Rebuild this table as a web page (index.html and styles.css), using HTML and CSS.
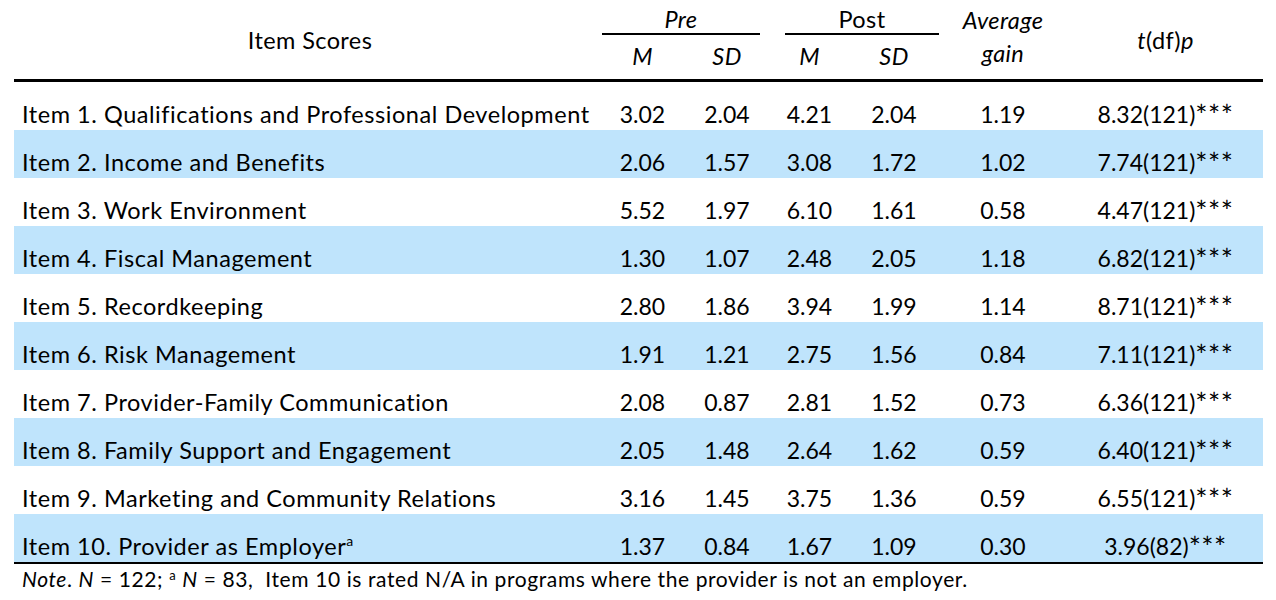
FILE: index.html
```html
<!DOCTYPE html>
<html lang="en">
<head>
<meta charset="utf-8">
<title>Item Scores</title>
<link rel="stylesheet" href="styles.css">
</head>
<body>
<div class="table">
  <div class="thead">
    <div class="h-item">Item Scores</div>
    <div class="h-group h-pre"><span class="i">Pre</span></div>
    <div class="h-group h-post">Post</div>
    <div class="h-avg"><span class="i">Average</span><span class="i">gain</span></div>
    <div class="h-t"><span class="i">t</span>(df)<span class="i">p</span></div>
    <div class="h-sub i">M</div>
    <div class="h-sub i">SD</div>
    <div class="h-sub i">M</div>
    <div class="h-sub i">SD</div>
  </div>
  <div class="tbody">
    <div class="row"><div class="c-name">Item 1. Qualifications and Professional Development</div><div>3.02</div><div>2.04</div><div>4.21</div><div>2.04</div><div>1.19</div><div>8.32(121)<span class="sig">***</span></div></div>
    <div class="row band"><div class="c-name">Item 2. Income and Benefits</div><div>2.06</div><div>1.57</div><div>3.08</div><div>1.72</div><div>1.02</div><div>7.74(121)<span class="sig">***</span></div></div>
    <div class="row"><div class="c-name">Item 3. Work Environment</div><div>5.52</div><div>1.97</div><div>6.10</div><div>1.61</div><div>0.58</div><div>4.47(121)<span class="sig">***</span></div></div>
    <div class="row band"><div class="c-name">Item 4. Fiscal Management</div><div>1.30</div><div>1.07</div><div>2.48</div><div>2.05</div><div>1.18</div><div>6.82(121)<span class="sig">***</span></div></div>
    <div class="row"><div class="c-name">Item 5. Recordkeeping</div><div>2.80</div><div>1.86</div><div>3.94</div><div>1.99</div><div>1.14</div><div>8.71(121)<span class="sig">***</span></div></div>
    <div class="row band"><div class="c-name">Item 6. Risk Management</div><div>1.91</div><div>1.21</div><div>2.75</div><div>1.56</div><div>0.84</div><div>7.11(121)<span class="sig">***</span></div></div>
    <div class="row"><div class="c-name">Item 7. Provider-Family Communication</div><div>2.08</div><div>0.87</div><div>2.81</div><div>1.52</div><div>0.73</div><div>6.36(121)<span class="sig">***</span></div></div>
    <div class="row band"><div class="c-name">Item 8. Family Support and Engagement</div><div>2.05</div><div>1.48</div><div>2.64</div><div>1.62</div><div>0.59</div><div>6.40(121)<span class="sig">***</span></div></div>
    <div class="row"><div class="c-name">Item 9. Marketing and Community Relations</div><div>3.16</div><div>1.45</div><div>3.75</div><div>1.36</div><div>0.59</div><div>6.55(121)<span class="sig">***</span></div></div>
    <div class="row band last"><div class="c-name">Item 10. Provider as Employer<sup class="sup">a</sup></div><div>1.37</div><div>0.84</div><div>1.67</div><div>1.09</div><div>0.30</div><div>3.96(82)<span class="sig">***</span></div></div>
  </div>
  <div class="note"><span class="i">Note</span>. <span class="i">N</span> = 122; <sup class="sup-note">a</sup> <span class="i">N</span> = 83,&nbsp; Item 10 is rated N/A in programs where the provider is not an employer.</div>
</div>
</body>
</html>
```
FILE: styles.css
```css
html, body {
  margin: 0;
  padding: 0;
  background: #ffffff;
}

body {
  font-family: Lato, "Open Sans", "Liberation Sans", sans-serif;
  font-variant-ligatures: none;
  color: #000000;
}

.i {
  font-style: italic;
}

.table {
  margin-left: 14px;
  width: 1249px;
}

.thead,
.row {
  display: grid;
  grid-template-columns: 586px 85px 84px 81px 88px 130px 195px;
}

.thead {
  grid-template-rows: 37px 42px;
  border-bottom: 3px solid #000;
  font-size: 23.5px;
  letter-spacing: 0.4px;
}

.h-item {
  grid-row: 1 / 3;
  grid-column: 1;
  align-self: center;
  text-align: center;
  padding-left: 6px;
}

.h-group {
  box-sizing: border-box;
  text-align: center;
  line-height: 28px;
  height: 35px;
  padding-top: 5px;
  border-bottom: 2px solid #000;
  align-self: start;
}

.h-pre {
  grid-row: 1;
  grid-column: 2 / 4;
  margin-left: 2px;
  margin-right: 9px;
}

.h-post {
  grid-row: 1;
  grid-column: 4 / 6;
  margin-left: 16px;
  margin-right: -1px;
}

.h-avg {
  grid-row: 1 / 3;
  grid-column: 6;
  display: flex;
  flex-direction: column;
  align-items: center;
  line-height: 33px;
  padding-top: 4px;
}

.h-t {
  grid-row: 1 / 3;
  grid-column: 7;
  align-self: center;
  text-align: center;
}

.h-sub {
  grid-row: 2;
  text-align: center;
  line-height: 32px;
  padding-top: 3px;
}

.row {
  height: 48px;
  font-size: 23px;
  line-height: 32px;
  box-sizing: border-box;
  padding-top: 16px;
}

.row > div {
  text-align: center;
  white-space: nowrap;
}

.row > .c-name {
  text-align: left;
  padding-left: 8px;
  font-size: 23.5px;
  letter-spacing: 0.55px;
}

.sig {
  font-size: 1.25em;
  line-height: 0;
  letter-spacing: 0.5px;
  vertical-align: -3px;
}

.band {
  background: #bfe4fc;
}

.last {
  border-bottom: 2px solid #000;
  height: 50px;
}

.sup {
  font-size: 14px;
  vertical-align: 9px;
  line-height: 0;
}

.note {
  font-size: 21px;
  letter-spacing: 0.6px;
  line-height: 30px;
  padding-left: 8px;
}

.sup-note {
  font-size: 13px;
  vertical-align: 7px;
  line-height: 0;
}
```
